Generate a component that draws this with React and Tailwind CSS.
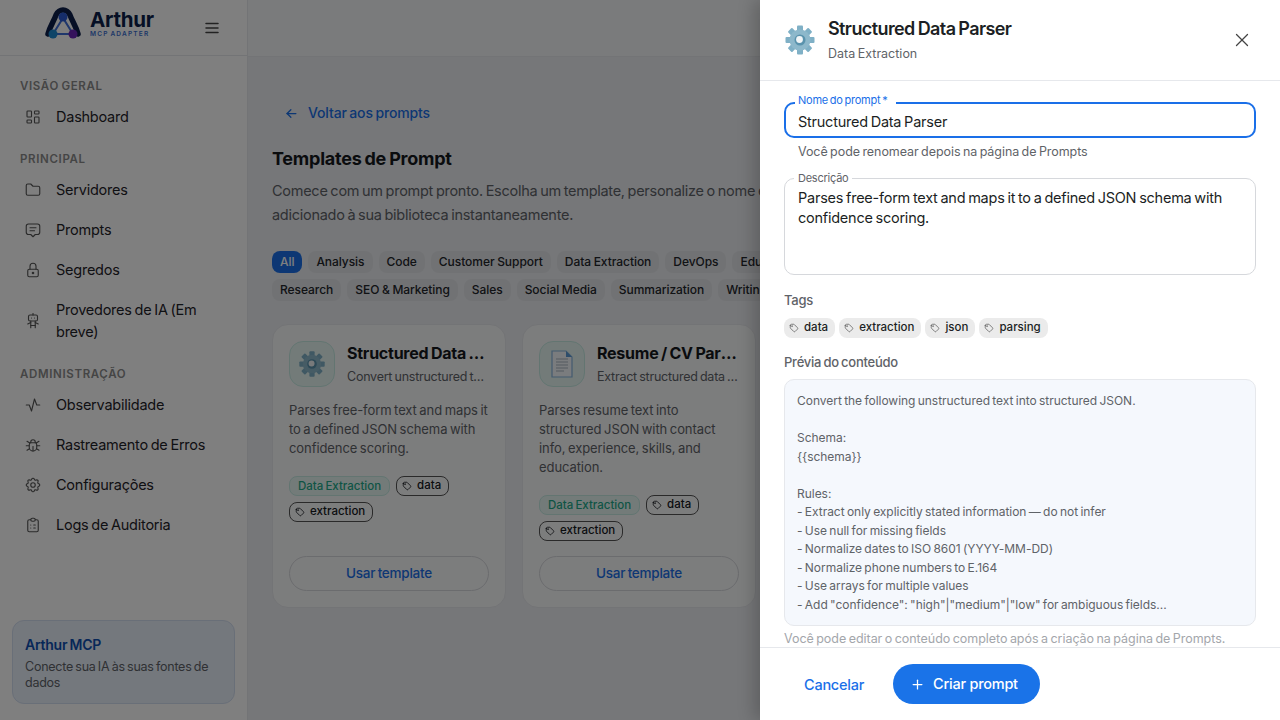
import React from 'react';
import {
  TbActivity, TbArrowLeft, TbBug, TbClipboardList, TbFolder, TbLayoutDashboard, TbLock,
  TbMenu2, TbMessage2, TbPlus, TbRobot, TbSettings, TbTag, TbX,
} from 'react-icons/tb';

const navGroups = [
  { title: 'VISÃO GERAL', items: [{ label: 'Dashboard', icon: TbLayoutDashboard }] },
  {
    title: 'PRINCIPAL',
    items: [
      { label: 'Servidores', icon: TbFolder },
      { label: 'Prompts', icon: TbMessage2 },
      { label: 'Segredos', icon: TbLock },
      { label: 'Provedores de IA (Em breve)', icon: TbRobot },
    ],
  },
  {
    title: 'ADMINISTRAÇÃO',
    items: [
      { label: 'Observabilidade', icon: TbActivity },
      { label: 'Rastreamento de Erros', icon: TbBug },
      { label: 'Configurações', icon: TbSettings },
      { label: 'Logs de Auditoria', icon: TbClipboardList },
    ],
  },
];

const chipRows = [
  ['All', 'Analysis', 'Code', 'Customer Support', 'Data Extraction', 'DevOps', 'Education'],
  ['Research', 'SEO & Marketing', 'Sales', 'Social Media', 'Summarization', 'Writing'],
];

const previewLines = [
  'Convert the following unstructured text into structured JSON.',
  '',
  'Schema:',
  '{{schema}}',
  '',
  'Rules:',
  '- Extract only explicitly stated information — do not infer',
  '- Use null for missing fields',
  '- Normalize dates to ISO 8601 (YYYY-MM-DD)',
  '- Normalize phone numbers to E.164',
  '- Use arrays for multiple values',
  '- Add "confidence": "high"|"medium"|"low" for ambiguous fields...',
];

function GearEmoji({ size }) {
  const teeth = [0, 45, 90, 135, 180, 225, 270, 315];
  return (
    <svg width={size} height={size} viewBox="0 0 32 32">
      {teeth.map((deg) => (
        <rect key={deg} x="13" y="1.5" width="6" height="6" rx="1" fill="#7fb0c6" transform={`rotate(${deg} 16 16)`} />
      ))}
      <circle cx="16" cy="16" r="10.5" fill="#8db8cb" />
      <circle cx="16" cy="16" r="5.5" fill="#5a93ad" />
      <circle cx="15.5" cy="15.5" r="3.4" fill="#f1f5f7" />
    </svg>
  );
}

function DocEmoji() {
  return (
    <svg width="26" height="28" viewBox="0 0 26 28">
      <path d="M3 1h14l6 6v20H3z" fill="#f4f8fc" stroke="#86b5de" strokeWidth="1.2" />
      <path d="M17 1l6 6h-6z" fill="#5a9ad6" />
      <path d="M7 9h12M7 12h12M7 15h12M7 18h12M7 21h8" stroke="#a9b4bf" strokeWidth="1.2" />
    </svg>
  );
}

function Logo() {
  return (
    <div className="flex items-start gap-[8px] -mt-[8px]">
      <svg width="38" height="33" viewBox="0 0 38 33">
        <path d="M4 27C6 19 10 14 12 8c1.500-3 4-5 7-5s5.500 2 7 5c2 6 6 11 8 19" fill="none" stroke="#0c1f4a" strokeWidth="5.500" strokeLinecap="round" />
        <path d="M19 11L9 27h20z" fill="none" stroke="#3f6ed8" strokeWidth="2" />
        <circle cx="19" cy="10" r="4.500" fill="#2a5bd7" />
        <circle cx="9" cy="27" r="4.500" fill="#1c8ad0" />
        <circle cx="29" cy="27" r="4.500" fill="#6a24b8" />
      </svg>
      <div className="flex flex-col pt-[2px]">
        <span className="text-[20.5px] leading-[22px] font-bold text-[#0c1f4a] tracking-[-0.3px]">Arthur</span>
        <span className="text-[6.5px] leading-[7px] font-semibold tracking-[1.2px] text-[#3b6fd0]">MCP ADAPTER</span>
      </div>
    </div>
  );
}

function Sidebar() {
  return (
    <aside className="w-[248px] shrink-0 h-full bg-white border-r border-[#e6e8ec] flex flex-col">
      <div className="h-[56px] shrink-0 border-b border-[#e6e8ec] flex items-center pl-[44px] pr-[26px] justify-between">
        <Logo />
        <TbMenu2 size={18} className="text-[#444] mt-[1px]" />
      </div>
      <nav className="flex-1 px-[12px] pt-[22px]">
        {navGroups.map((group) => (
          <div key={group.title} className="mb-[14px]">
            <div className="px-[8px] text-[11.5px] leading-[16px] font-semibold tracking-[0.65px] text-[#8b8b8b]">{group.title}</div>
            <div className="mt-[3px]">
              {group.items.map((item) => (
                <div key={item.label} className="flex items-center py-[9px] pl-[12px] gap-[14px] text-[14.5px] leading-[22px] text-[#1f2329]">
                  <item.icon size={18} strokeWidth={1.5} className="shrink-0 text-[#555]" />
                  <span className="pr-[16px]">{item.label}</span>
                </div>
              ))}
            </div>
          </div>
        ))}
      </nav>
      <div className="mx-[12px] mb-[16px] h-[84px] rounded-[12px] border border-[#d3def0] bg-[#e8f0fb] px-[12px] pt-[14px]">
        <div className="text-[14px] leading-[20px] font-semibold text-[#0f4fb0]">Arthur MCP</div>
        <div className="mt-[4px] text-[12.5px] leading-[16px] text-[#5f6368]">Conecte sua IA às suas fontes de dados</div>
      </div>
    </aside>
  );
}

function TemplateCard({ icon, title, subtitle, text }) {
  return (
    <div className="w-[234px] h-[284px] shrink-0 rounded-[16px] border border-[#e6e8ec] bg-[#f9fafb] p-[16px] flex flex-col">
      <div className="flex gap-[12px]">
        <div className="w-[46px] h-[46px] shrink-0 rounded-[14px] border border-[#c6ebe3] bg-[#e6f7f3] flex items-center justify-center">{icon}</div>
        <div className="min-w-0 flex-1 pt-[1px]">
          <div className="truncate text-[16px] leading-[22px] font-bold text-[#15181d]">{title}</div>
          <div className="truncate mt-[4px] text-[12.5px] leading-[18px] text-[#5f6368]">{subtitle}</div>
        </div>
      </div>
      <p className="mt-[14px] text-[13px] leading-[19px] tracking-[-0.08px] text-[#5f6368]">{text}</p>
      <div className="mt-[18px] flex flex-wrap gap-x-[6px] gap-y-[6px] tracking-normal">
        <span className="h-[20px] px-[8px] rounded-[8px] border border-[#c6ebe3] bg-[#e6f7f3] text-[11.5px] leading-[18px] font-medium text-[#1fa98a]">Data Extraction</span>
        {['data', 'extraction'].map((t) => (
          <span key={t} className="h-[20px] px-[5px] pr-[7px] rounded-[8px] border border-[#555] flex items-center gap-[5px] text-[11.5px] font-medium text-[#15181d]">
            <TbTag size={10} />{t}
          </span>
        ))}
      </div>
      <div className="mt-auto h-[35px] rounded-full border border-[#d6d8dc] flex items-center justify-center text-[13.5px] font-medium text-[#1a6fe8]">Usar template</div>
    </div>
  );
}

function MainContent() {
  return (
    <main className="flex-1 min-w-0 h-full overflow-hidden bg-[#eceef2]">
      <div className="h-[57px] border-b border-[#e6e8ec] bg-[#f5f6f8]" />
      <div className="px-[24px] pt-[46px]">
        <div className="flex items-center gap-[9px] pl-[12px] text-[14px] leading-[20px] tracking-[-0.01em] font-medium text-[#1a6fe8]">
          <TbArrowLeft size={15} />
          Voltar aos prompts
        </div>
        <h1 className="mt-[23px] text-[18px] leading-[26px] font-bold text-[#15181d]">Templates de Prompt</h1>
        <p className="mt-[7px] w-[900px] text-[14.5px] leading-[24px] tracking-[-0.27px] text-[#5f6368]">
          Comece com um prompt pronto. Escolha um template, personalize o nome e ele será
          <br />
          adicionado à sua biblioteca instantaneamente.
        </p>
        <div className="mt-[24px] flex flex-col gap-[6px] tracking-[-0.05px] [word-spacing:-0.5px]">
          {chipRows.map((row, i) => (
            <div key={i} className="flex gap-[6px]">
              {row.map((chip) => (
                <span
                  key={chip}
                  className={
                    chip === 'All'
                      ? 'h-[22px] px-[8px] rounded-[8px] bg-[#1a6fe8] text-white text-[12px] leading-[22px] font-medium whitespace-nowrap'
                      : 'h-[22px] px-[8px] rounded-[8px] bg-[#e3e5e8] text-[#22262b] text-[12px] leading-[22px] font-medium whitespace-nowrap'
                  }
                >
                  {chip}
                </span>
              ))}
            </div>
          ))}
        </div>
        <div className="mt-[23px] flex gap-[16px]">
          <TemplateCard
            icon={<GearEmoji size={28} />}
            title="Structured Data Parser"
            subtitle="Convert unstructured text into JSON"
            text="Parses free-form text and maps it to a defined JSON schema with confidence scoring."
          />
          <TemplateCard
            icon={<DocEmoji />}
            title="Resume / CV Parser"
            subtitle="Extract structured data from resumes"
            text="Parses resume text into structured JSON with contact info, experience, skills, and education."
          />
        </div>
      </div>
    </main>
  );
}

function Drawer() {
  return (
    <div className="absolute right-0 top-0 bottom-0 w-[520px] bg-white flex flex-col shadow-[-6px_0_16px_rgba(0,0,0,0.2)]">
      <div className="h-[81px] shrink-0 border-b border-[#e6e8ec] pl-[24px] pr-[27px] flex items-center gap-[12px]">
        <GearEmoji size={32} />
        <div className="flex-1 -mt-[1px]">
          <div className="text-[18px] leading-[24px] font-semibold tracking-[-0.6px] text-[#1c1f24]">Structured Data Parser</div>
          <div className="mt-[4px] text-[12.5px] leading-[18px] tracking-normal text-[#5f6368]">Data Extraction</div>
        </div>
        <TbX size={22} strokeWidth={1.4} className="text-[#444]" />
      </div>
      <div className="flex-1 min-h-0 overflow-hidden px-[24px] pt-[21px]">
        <div className="relative h-[36px] rounded-[10px] border-2 border-[#1a6fe8] pl-[12px] pt-[7px] text-[14.5px] leading-[22px] text-[#1c1f24]">
          Structured Data Parser
          <span className="absolute -top-[11px] left-[9px] bg-white pl-[3px] pr-[9px] text-[11px] leading-[14px] text-[#1a6fe8]">Nome do prompt *</span>
        </div>
        <div className="mt-[5px] pl-[14px] text-[12.5px] leading-[18px] tracking-[-0.005em] text-[#5f6368]">Você pode renomear depois na página de Prompts</div>
        <div className="relative mt-[17px] h-[97px] rounded-[10px] border border-[#d6d8dc] px-[13px] pt-[9px] text-[14.5px] leading-[20px] text-[#1c1f24]">
          Parses free-form text and maps it to a defined JSON schema with confidence scoring.
          <span className="absolute -top-[8px] left-[9px] bg-white px-[4px] text-[11px] leading-[14px] text-[#5f6368]">Descrição</span>
        </div>
        <div className="mt-[16px] text-[13px] leading-[18px] font-medium text-[#5f6368]">Tags</div>
        <div className="mt-[9px] flex gap-[4px] tracking-normal">
          {['data', 'extraction', 'json', 'parsing'].map((t) => (
            <span key={t} className="h-[20px] pl-[5px] pr-[7px] rounded-[8px] bg-[#ebebeb] flex items-center gap-[5px] text-[11.5px] font-medium text-[#1c1f24]">
              <TbTag size={10} className="text-[#666]" />{t}
            </span>
          ))}
        </div>
        <div className="mt-[15px] text-[13px] leading-[18px] font-medium text-[#5f6368]">Prévia do conteúdo</div>
        <div className="mt-[8px] h-[247px] rounded-[10px] border border-[#e6e8ec] bg-[#f5f8fd] px-[12px] pt-[12px] text-[12px] leading-[18.55px] tracking-[-0.03px] text-[#5f6368]">
          {previewLines.map((line, i) => (
            <div key={i} className="h-[18.55px]">{line}</div>
          ))}
        </div>
        <div className="mt-[4px] text-[12.5px] leading-[18px] tracking-[-0.003em] text-[#a3a6ab]">Você pode editar o conteúdo completo após a criação na página de Prompts.</div>
      </div>
      <div className="h-[73px] shrink-0 border-t border-[#e6e8ec] flex items-center pl-[44px] gap-[29px] [word-spacing:0px]">
        <span className="text-[14.5px] mt-[1px] font-medium text-[#1a6fe8]">Cancelar</span>
        <div className="h-[40px] w-[147px] pl-[17px] rounded-full bg-[#1a73e8] flex items-center gap-[8px] text-[14.5px] font-medium text-white">
          <TbPlus size={15} />
          Criar prompt
        </div>
      </div>
    </div>
  );
}

export default function App() {
  return (
    <div className="relative w-[1280px] h-[720px] overflow-hidden flex font-['Inter',sans-serif] tracking-[-0.015em] [word-spacing:-1px]">
      <Sidebar />
      <MainContent />
      <div className="absolute inset-0 bg-black/50" />
      <Drawer />
    </div>
  );
}
